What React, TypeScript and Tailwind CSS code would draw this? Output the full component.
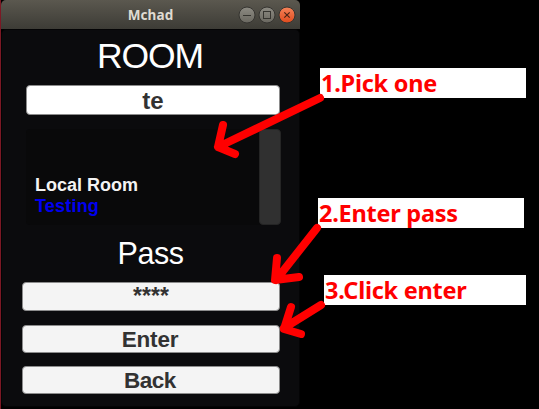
import React from "react";

const sans = "font-['Liberation_Sans',Arial,sans-serif]";
const humanist = "font-['Noto_Sans','Open_Sans',sans-serif]";
const field =
  "flex items-center justify-center rounded-[4px] border border-[#8c8c8c] font-bold text-[#323232] leading-none whitespace-nowrap";

function WindowButton({ kind }: { kind: "min" | "max" | "close" }) {
  const close = kind === "close";
  return (
    <svg width="18" height="18" viewBox="0 0 18 18" className="block">
      <defs>
        <linearGradient id={"fill-" + kind} x1="0" y1="0" x2="0" y2="1">
          <stop offset="0" stopColor={close ? "#f5845a" : "#8d8b83"} />
          <stop offset="1" stopColor={close ? "#df4a1c" : "#69675f"} />
        </linearGradient>
      </defs>
      <circle cx="9" cy="9" r="8" fill={`url(#fill-${kind})`} stroke="#353430" strokeWidth="1" />
      {kind === "min" && <path d="M5 9.5H13" stroke="#35342f" />}
      {kind === "max" && <rect x="5.5" y="5.5" width="7" height="7" fill="none" stroke="#35342f" />}
      {close && <path d="M6.3 6.3L11.7 11.7M11.7 6.3L6.3 11.7" stroke="#4a2415" strokeWidth="1.2" />}
    </svg>
  );
}

function Note({ children, className }: { children: React.ReactNode; className: string }) {
  return (
    <div className={`h-[30px] bg-white text-[#ff0000] font-bold text-[23.5px] leading-[31px] tracking-[-0.25px] whitespace-nowrap ${humanist} ${className}`}>
      {children}
    </div>
  );
}

export default function App() {
  return (
    <div className={`relative flex h-[409px] w-[539px] overflow-hidden bg-black ${sans}`}>
      <div className="h-[409px] w-px bg-[#7c1824]" />
      <main className="flex h-[409px] w-[299px] flex-col">
        <header className="grid h-[29px] grid-cols-[1fr_auto_1fr] items-center rounded-t-[5px] bg-gradient-to-b from-[#5b584f] to-[#3d3c36] pr-1">
          <span />
          <h1 className={`pl-[4px] text-[13.5px] font-bold leading-[28px] text-[#dfdbd2] tracking-[0.1px] ${humanist}`}>Mchad</h1>
          <div className="flex justify-end gap-[2px]">
            <WindowButton kind="min" />
            <WindowButton kind="max" />
            <WindowButton kind="close" />
          </div>
        </header>
        <section className="flex h-[378px] flex-col rounded-[5px] border border-[#040405] bg-[#0b0b0d] pl-5 pr-[19px]">
          <h2 className="mt-[5px] h-[40px] pr-[2px] text-center text-[35.5px] leading-[42px] text-white tracking-[-1.1px]">ROOM</h2>
          <div className={`ml-1 mt-[10px] h-[30px] bg-white pt-[2px] text-[24px] ${field}`}>te</div>
          <div className="-mr-px ml-1 mt-[14px] flex h-[96px] justify-between rounded-[4px] bg-[#09090a]">
            <ul className="pl-[9px] pt-[46px] text-[18px] font-bold leading-[21px]">
              <li className="text-[#f3f3f3]">Local Room</li>
              <li className="text-[#0000f0] tracking-[0.2px]">Testing</li>
            </ul>
            <div className="w-[22px] rounded-[4px] border border-[#252525] bg-[#303030]" />
          </div>
          <h2 className="mt-[11px] h-[34px] pr-px text-center text-[30.5px] leading-[34px] text-white tracking-[-0.5px]">Pass</h2>
          <div className={`mt-[12px] h-[29px] bg-[#f4f4f4] text-[23px] ${field}`}>****</div>
          <button className={`mt-[14px] h-[28px] bg-[#f4f4f4] pr-[2px] pt-[2px] text-[22.5px] tracking-[-0.2px] ${field}`}>Enter</button>
          <button className={`mt-[13px] h-[28px] bg-[#f4f4f4] pr-[2px] pt-[2px] text-[22.5px] tracking-[-0.5px] ${field}`}>Back</button>
        </section>
      </main>
      <aside className="flex w-[239px] flex-col pt-[68px]">
        <Note className="ml-5 w-[206px] pl-[1px]">1.Pick one</Note>
        <Note className="ml-[18px] mt-[100px] w-[206px] pl-[1px]">2.Enter pass</Note>
        <Note className="ml-6 mt-[47px] w-[202px] pl-[1px]">3.Click enter</Note>
      </aside>
      <svg className="pointer-events-none absolute inset-0" width="539" height="409" viewBox="0 0 539 409" fill="none" stroke="#ff0000" strokeWidth="8" strokeLinecap="round" strokeLinejoin="round">
        <path d="M320 98L218 147M223 125L218 147L235 154" />
        <path d="M317 228L276 280M277 258L275 280L299 277" />
        <path d="M321 305L284 328M291 307L284 329L301 334" />
      </svg>
    </div>
  );
}
